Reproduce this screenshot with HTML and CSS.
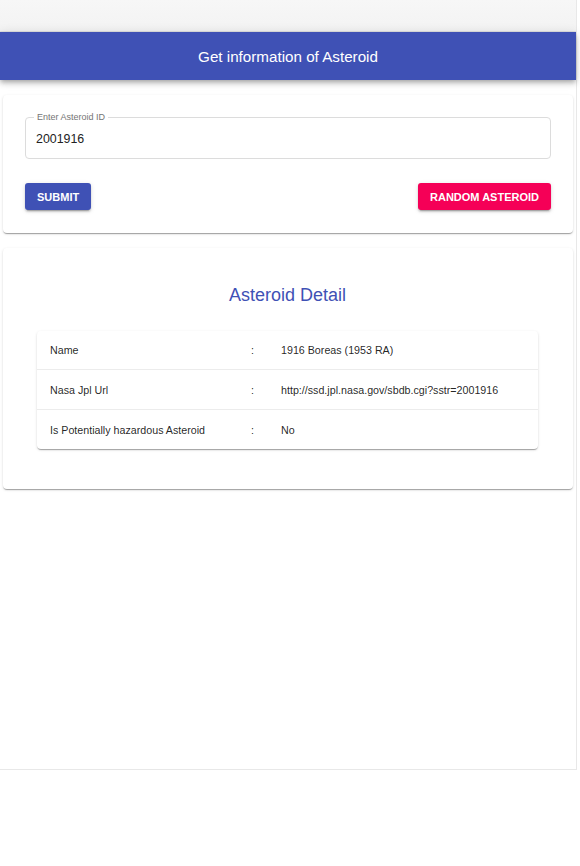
FILE: index.html
```html
<!DOCTYPE html>
<html>
<head>
<meta charset="utf-8">
<link rel="stylesheet" href="styles.css">
</head>
<body>
<div class="frame">
  <div class="topbar"></div>
  <header class="appbar">Get information of Asteroid</header>
  <section class="card form-card">
    <div class="field">
      <span class="field-label">Enter Asteroid ID</span>
      <span class="field-value">2001916</span>
    </div>
    <div class="actions">
      <button class="btn btn-primary">Submit</button>
      <button class="btn btn-secondary">Random Asteroid</button>
    </div>
  </section>
  <section class="card detail-card">
    <h2 class="detail-title">Asteroid Detail</h2>
    <div class="table">
      <div class="row"><span>Name</span><span>:</span><span>1916 Boreas (1953 RA)</span></div>
      <div class="row"><span>Nasa Jpl Url</span><span>:</span><span>http://ssd.jpl.nasa.gov/sbdb.cgi?sstr=2001916</span></div>
      <div class="row"><span>Is Potentially hazardous Asteroid</span><span>:</span><span>No</span></div>
    </div>
  </section>
</div>
</body>
</html>
```
FILE: styles.css
```css
html, body {
  margin: 0;
  padding: 0;
  background: #fff;
}
body {
  font-family: "Liberation Sans", Arial, sans-serif;
  color: rgba(0,0,0,0.87);
}
.frame {
  width: 577px;
  height: 770px;
  box-sizing: border-box;
  border-right: 1px solid #e8e8e8;
  border-bottom: 1px solid #e8e8e8;
  display: flex;
  flex-direction: column;
}
.topbar {
  height: 32px;
  background: linear-gradient(#f7f7f7, #f3f3f3);
  border-bottom: 1px solid #e2e2e2;
  box-sizing: border-box;
}
.appbar {
  height: 48px;
  background: #3f51b5;
  color: #fff;
  font-size: 15.2px;
  padding-top: 1px;
  box-sizing: border-box;
  display: flex;
  align-items: center;
  justify-content: center;
  box-shadow: 0 2px 4px -1px rgba(0,0,0,0.2), 0 4px 5px 0 rgba(0,0,0,0.14), 0 1px 10px 0 rgba(0,0,0,0.12);
  position: relative;
  z-index: 1;
}
.card {
  background: #fff;
  border-radius: 4px;
  box-shadow: 0 2px 1px -1px rgba(0,0,0,0.2), 0 1px 1px 0 rgba(0,0,0,0.14), 0 1px 3px 0 rgba(0,0,0,0.12);
  margin: 15px 3px 0 3px;
}
.form-card {
  padding: 22px 22px 23px 22px;
  display: flex;
  flex-direction: column;
  gap: 24px;
}
.field {
  position: relative;
  height: 42px;
  box-sizing: border-box;
  border: 1px solid #dcdcdc;
  border-radius: 4px;
  display: flex;
  align-items: center;
  padding: 0 10px;
}
.field-label {
  position: absolute;
  left: 8px;
  top: -6px;
  font-size: 9px;
  line-height: 11px;
  color: #757575;
  background: #fff;
  padding: 0 3px;
}
.field-value {
  font-size: 12.4px;
  color: #222;
  padding-top: 1px;
}
.actions {
  display: flex;
  justify-content: space-between;
}
.btn {
  height: 27px;
  padding: 0 12px;
  border: none;
  border-radius: 3px;
  font-family: "Liberation Sans", Arial, sans-serif;
  font-size: 11px;
  font-weight: bold;
  text-transform: uppercase;
  color: #fff;
  box-shadow: 0 3px 1px -2px rgba(0,0,0,0.2), 0 2px 2px 0 rgba(0,0,0,0.14), 0 1px 5px 0 rgba(0,0,0,0.12);
}
.btn-primary { background: #3f51b5; }
.btn-secondary { background: #f50057; }
.detail-card {
  padding: 36px 35px 40px 34px;
}
.detail-title {
  margin: 0 0 25px 0;
  font-size: 18px;
  line-height: 22px;
  font-weight: normal;
  color: #3f51b5;
  text-align: center;
}
.table {
  border-radius: 4px;
  box-shadow: 0 2px 1px -1px rgba(0,0,0,0.2), 0 1px 1px 0 rgba(0,0,0,0.14), 0 1px 3px 0 rgba(0,0,0,0.12);
}
.row {
  display: grid;
  grid-template-columns: 201px 30px 1fr;
  align-items: center;
  height: 40px;
  padding-left: 13px;
  font-size: 10.7px;
  color: rgba(0,0,0,0.87);
  border-bottom: 1px solid #ececec;
  box-sizing: border-box;
}
.row:first-child {
  height: 39px;
}
.row:last-child {
  border-bottom: none;
  height: 39px;
}
```
